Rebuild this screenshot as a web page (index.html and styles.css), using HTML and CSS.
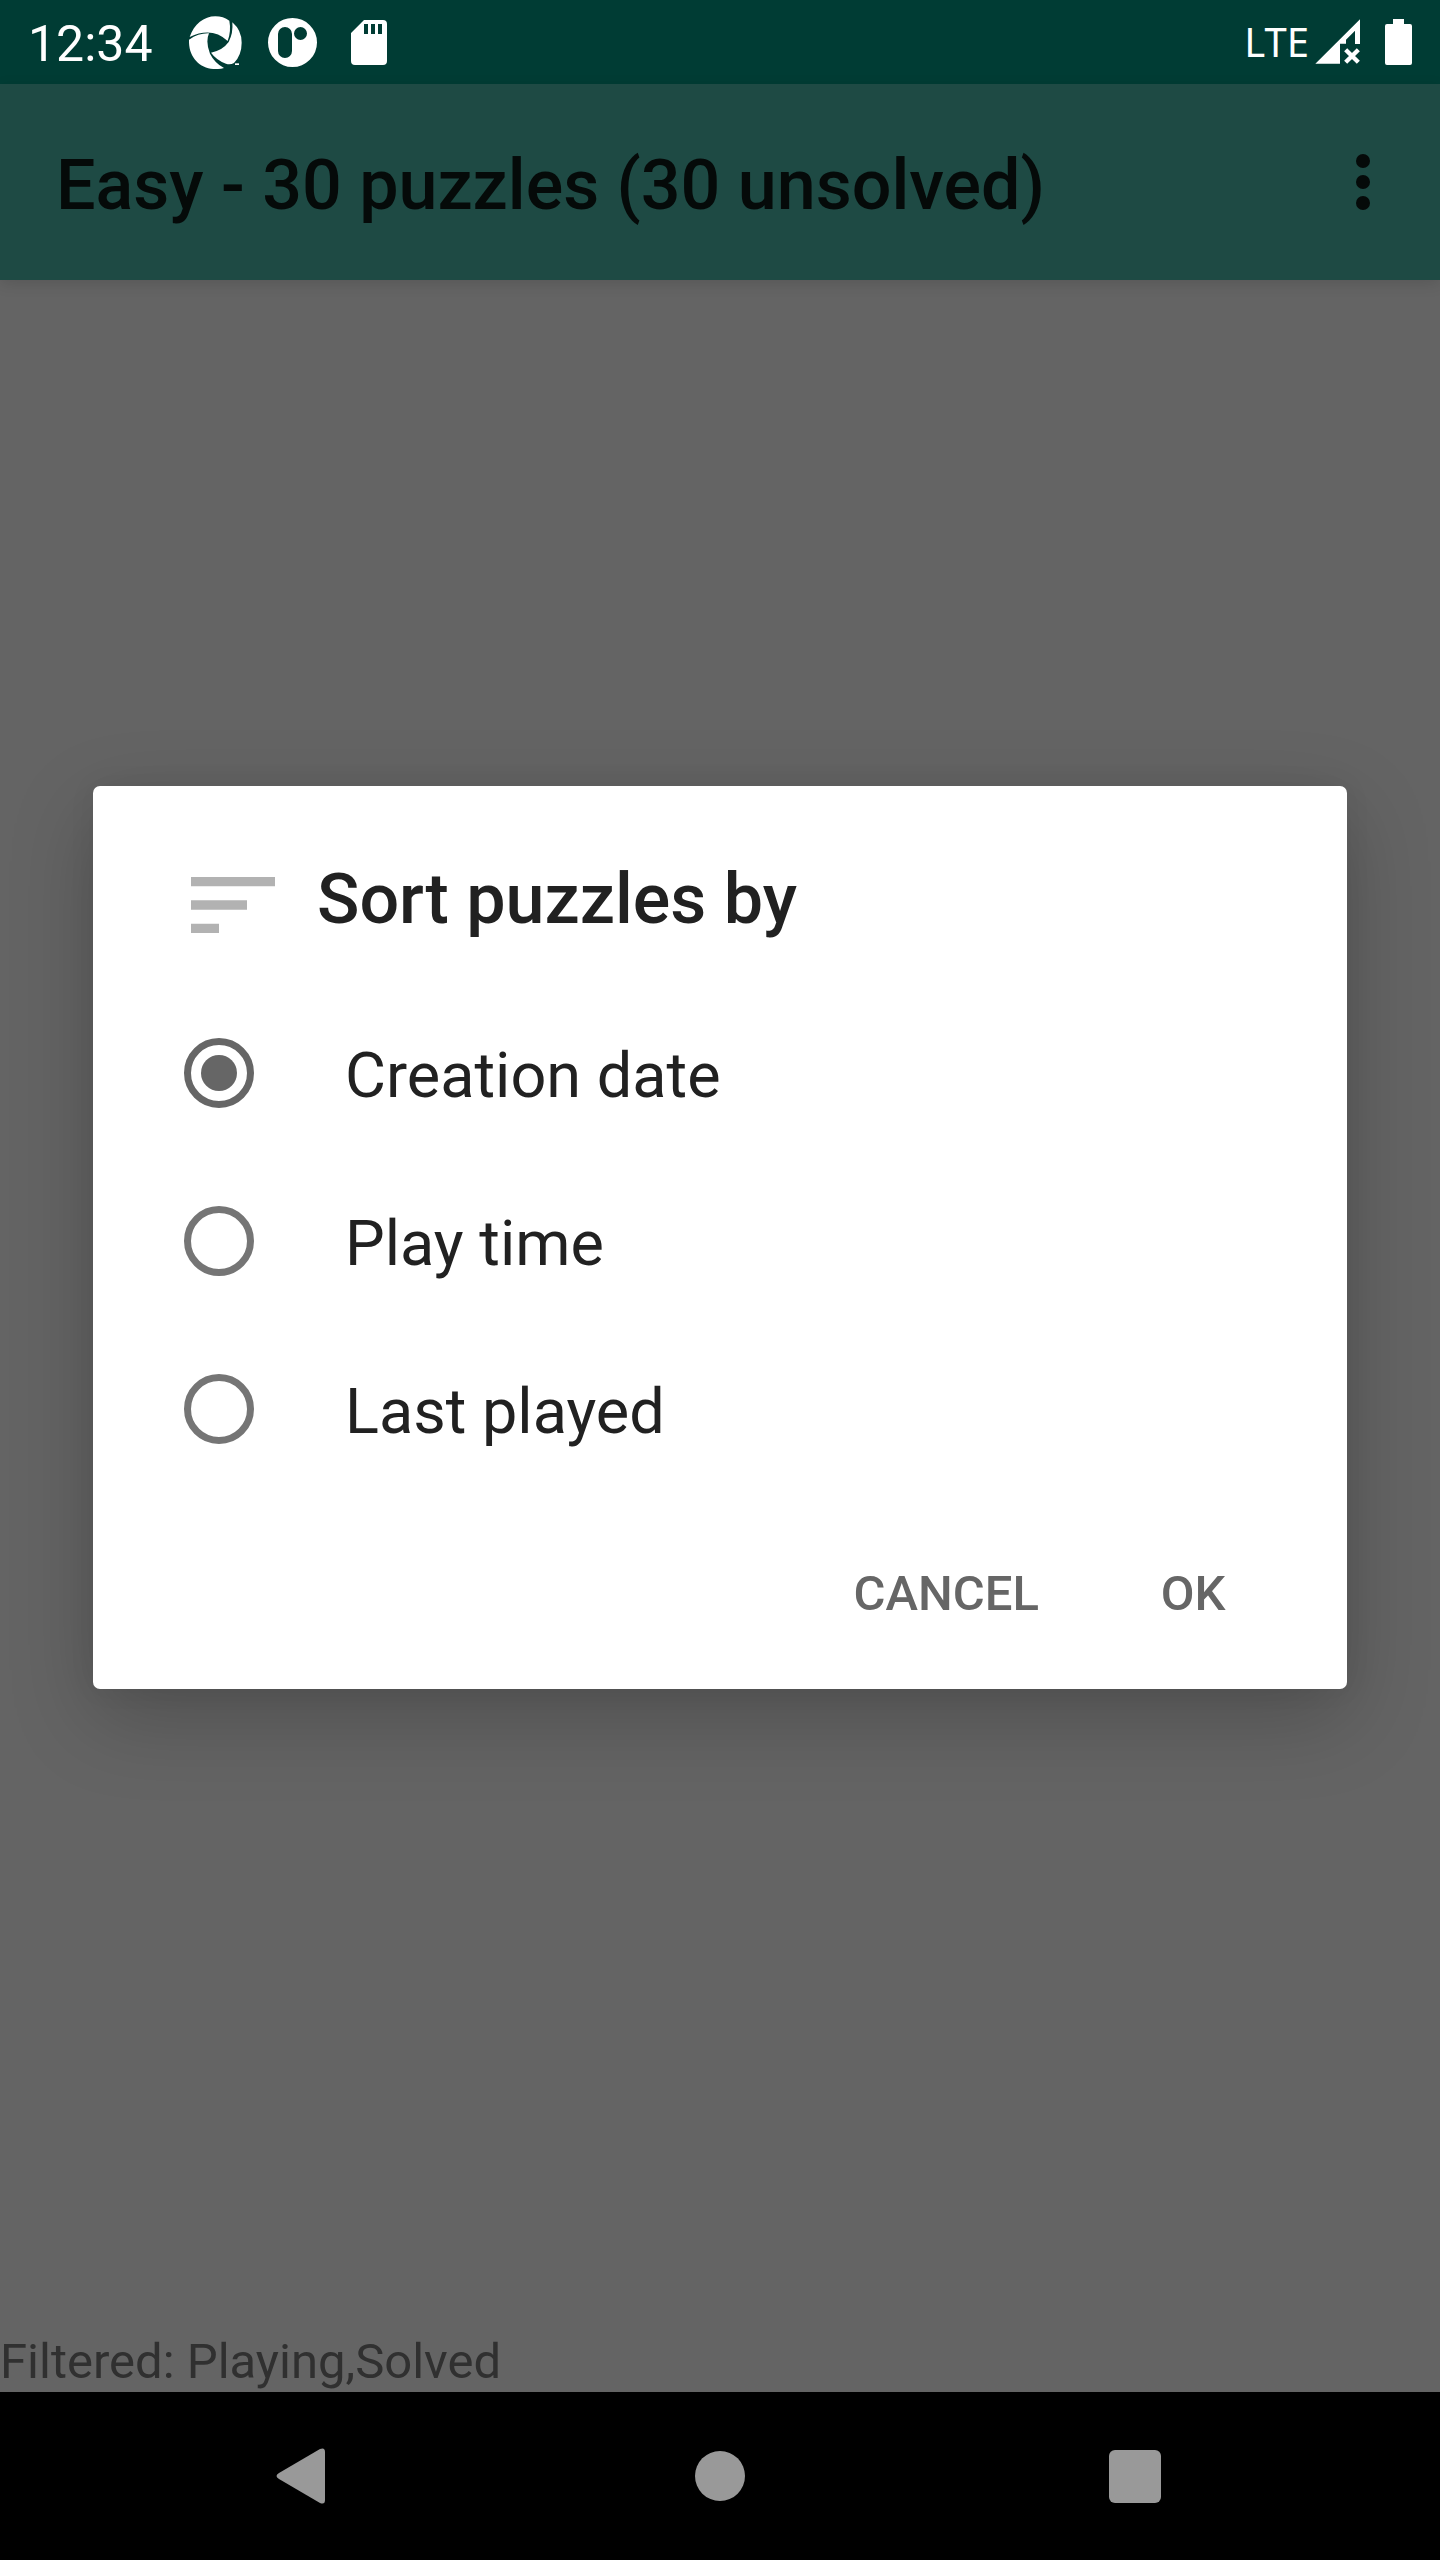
FILE: index.html
```html
<!DOCTYPE html>
<html lang="en">
<head>
<meta charset="utf-8">
<meta name="viewport" content="width=device-width, initial-scale=1">
<title>Easy puzzles</title>
<link rel="stylesheet" href="styles.css">
</head>
<body>
<header class="status-bar">
  <div class="status-group status-start">
    <time class="clock">12:34</time>
    <svg class="icon-swirl" viewBox="567 47 159 159" aria-hidden="true">
      <path d="M569 110C582 72 612 48 646 48Q670 48 688 61Q694 92 683 122Q636 78 569 110Z"/>
      <path d="M697 66Q725 90 725 127Q725 164 702 188Q690 194 678 190Q650 180 633 157Q668 150 686 125Q700 98 697 66Z"/>
      <path d="M567 118Q596 98 627 99Q616 124 630 160Q644 188 672 203Q658 207 640 206C596 202 565 168 567 118Z"/>
      <path d="M705 189h12v5h-12z"/>
    </svg>
    <svg class="icon-round" viewBox="0 0 49 49" aria-hidden="true">
      <path fill-rule="evenodd" d="M24.500 0a24.500 24.500 0 1 0 0 49a24.500 24.500 0 1 0 0-49ZM17 9a7 7 0 0 1 7 7v17a7 7 0 0 1-14 0V16a7 7 0 0 1 7-7ZM32.500 9a6.500 6.500 0 1 1 0 13a6.500 6.500 0 1 1 0-13Z"/>
    </svg>
    <svg class="icon-sd" viewBox="0 0 36 45" aria-hidden="true">
      <path fill-rule="evenodd" d="M13 0H32Q36 0 36 4V41Q36 45 32 45H4Q0 45 0 41V13ZM13 4v10h4V4ZM20 4v10h4V4ZM27 4v10h4V4Z"/>
    </svg>
  </div>
  <div class="status-group status-end">
    <span class="network">LTE</span>
    <svg class="icon-signal" viewBox="285 57 135 138" aria-hidden="true">
      <path d="M286 191L420 58V132H405V92L378 119V131H360V191Z"/>
      <path class="signal-cross" d="M377 149L415 187M415 149L377 187"/>
    </svg>
    <svg class="icon-battery" viewBox="0 0 27 46" aria-hidden="true">
      <path d="M8 0H19V5H25Q27 5 27 7V44Q27 46 25 46H2Q0 46 0 44V7Q0 5 2 5H8Z"/>
    </svg>
  </div>
</header>

<main class="app">
  <div class="app-bar">
    <h1 class="app-title">Easy - 30 puzzles (30 unsolved)</h1>
    <button class="menu-button" type="button" aria-label="More options">
      <svg viewBox="0 0 24 24" aria-hidden="true"><circle cx="12" cy="6" r="2"/><circle cx="12" cy="12" r="2"/><circle cx="12" cy="18" r="2"/></svg>
    </button>
  </div>
  <p class="filter-status">Filtered: Playing,Solved</p>

  <div class="overlay">
    <form class="dialog" role="dialog" aria-labelledby="sort-title">
      <div class="dialog-header">
        <svg class="icon-sort" viewBox="0 0 24 24" aria-hidden="true"><path d="M3 18h6v-2H3v2zM3 6v2h18V6H3zm0 7h12v-2H3v2z"/></svg>
        <h2 class="dialog-title" id="sort-title">Sort puzzles by</h2>
      </div>
      <div class="options">
        <label class="option"><input class="radio" type="radio" name="sort" value="created" checked><span class="option-text">Creation date</span></label>
        <label class="option"><input class="radio" type="radio" name="sort" value="time"><span class="option-text">Play time</span></label>
        <label class="option"><input class="radio" type="radio" name="sort" value="played"><span class="option-text">Last played</span></label>
      </div>
      <div class="actions">
        <button class="action" type="button">CANCEL</button>
        <button class="action" type="button">OK</button>
      </div>
    </form>
  </div>
</main>

<nav class="nav-bar" aria-label="System">
  <button class="nav-button" type="button" aria-label="Back">
    <svg viewBox="0 0 98 98" aria-hidden="true"><path d="M23 46L64 22Q69 20 69 25V73Q69 78 64 76L23 52Q18 49 23 46Z"/></svg>
  </button>
  <button class="nav-button" type="button" aria-label="Home">
    <svg viewBox="0 0 98 98" aria-hidden="true"><circle cx="49" cy="49" r="25"/></svg>
  </button>
  <button class="nav-button" type="button" aria-label="Recent apps">
    <svg viewBox="0 0 98 98" aria-hidden="true"><rect x="23" y="23" width="52" height="53" rx="6"/></svg>
  </button>
</nav>
</body>
</html>
```

FILE: styles.css
```css
* {
  box-sizing: border-box;
}

body {
  margin: 0;
  min-height: 100vh;
  display: flex;
  flex-direction: column;
  background: #646464;
  font-family: Roboto, "Liberation Sans", sans-serif;
}

h1, h2, p {
  margin: 0;
}

button {
  border: 0;
  padding: 0;
  background: none;
  font: inherit;
}

svg {
  display: block;
}

/* Status bar */
.status-bar {
  height: 84px;
  padding: 0 28px;
  display: flex;
  justify-content: space-between;
  align-items: center;
  background: #003c34;
  color: #fff;
}

.status-bar svg {
  fill: #fff;
}

.status-group {
  display: flex;
  align-items: center;
}

.clock {
  width: 161px;
  padding-top: 4px;
  font-size: 50px;
  line-height: 56px;
}

.icon-swirl {
  width: 53px;
  height: 53px;
  margin-right: 26px;
}

.icon-round {
  width: 49px;
  height: 49px;
  margin-right: 34px;
}

.icon-sd {
  width: 36px;
  height: 45px;
}

.network {
  margin-right: 6px;
  font-family: "Noto Sans", sans-serif;
  font-size: 40px;
  line-height: 56px;
}

.icon-signal {
  width: 45px;
  height: 46px;
  margin-right: 25px;
}

.signal-cross {
  fill: none;
  stroke: #fff;
  stroke-width: 13;
}

.icon-battery {
  width: 27px;
  height: 46px;
}

/* Application window */
.app {
  flex: 1;
  position: relative;
  display: flex;
  flex-direction: column;
  justify-content: space-between;
}

.app-bar {
  height: 196px;
  padding: 0 35px 0 56px;
  display: flex;
  align-items: center;
  justify-content: space-between;
  background: #1e4a44;
  box-shadow: 0 4px 14px rgba(0, 0, 0, 0.12);
}

.app-title {
  padding-top: 6px;
  color: #050a09;
  font-size: 70px;
  font-weight: 500;
  line-height: 84px;
}

.menu-button svg {
  width: 84px;
  height: 84px;
  fill: #050a09;
}

.filter-status {
  padding-bottom: 2px;
  color: #303030;
  font-size: 49px;
  line-height: 56px;
}

/* Sort dialog */
.overlay {
  position: absolute;
  inset: 0;
  padding: 0 93px 1px;
  display: flex;
  align-items: center;
}

.dialog {
  flex: 1;
  padding-top: 63px;
  border-radius: 7px;
  background: #fff;
  box-shadow: 0 28px 84px rgba(0, 0, 0, 0.21), 0 0 28px rgba(0, 0, 0, 0.06);
  color: #212121;
}

.dialog-header {
  padding: 0 84px 28px;
  display: flex;
  gap: 28px;
}

.icon-sort {
  width: 112px;
  height: 112px;
  fill: #b2b2b2;
}

.dialog-title {
  font-size: 70px;
  font-weight: 500;
  line-height: 100px;
}

.option {
  height: 168px;
  padding: 0 91px;
  display: flex;
  align-items: center;
  gap: 91px;
}

.option-text {
  padding-top: 6px;
  font-size: 63px;
  line-height: 74px;
}

.radio {
  appearance: none;
  width: 70px;
  height: 70px;
  margin: 0;
  display: grid;
  place-items: center;
  border: 7px solid #757575;
  border-radius: 50%;
}

.radio:checked {
  border-color: #666;
}

.radio:checked::before {
  content: "";
  width: 36px;
  height: 36px;
  border-radius: 50%;
  background: #666;
}

.actions {
  padding: 14px 42px;
  display: flex;
  justify-content: flex-end;
}

.action {
  min-width: 224px;
  height: 168px;
  padding: 6px 42px 0;
  color: #666;
  font-size: 49px;
  font-weight: 500;
  line-height: 56px;
}

/* System navigation */
.nav-bar {
  height: 168px;
  padding: 0 165px;
  display: flex;
  justify-content: space-between;
  background: #000;
}

.nav-button {
  width: 280px;
  display: grid;
  place-items: center;
}

.nav-button svg {
  width: 98px;
  height: 98px;
  fill: #999;
}
```
